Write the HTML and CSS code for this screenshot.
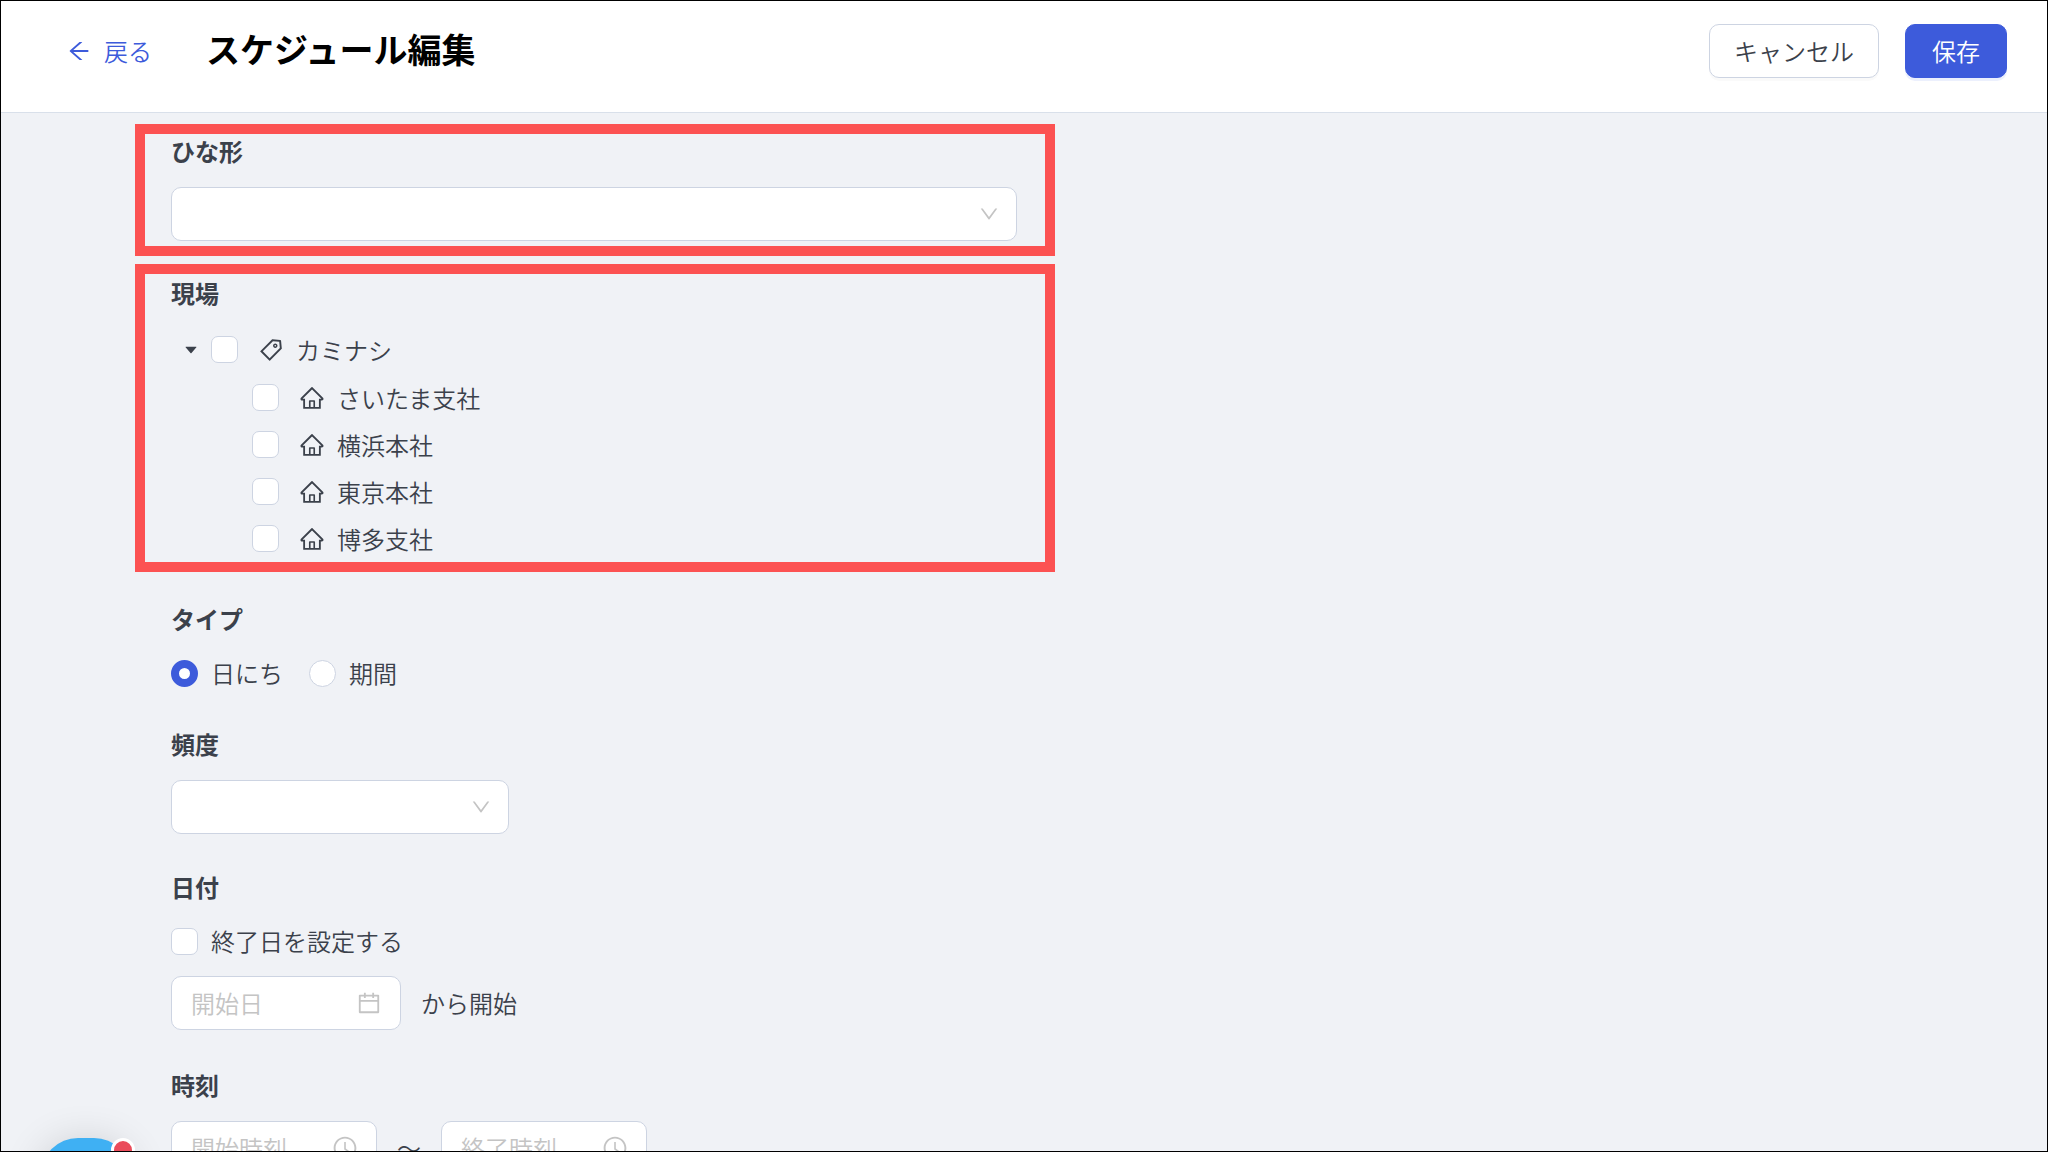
FILE: index.html
```html
<!DOCTYPE html>
<html lang="ja">
<head>
  <meta charset="UTF-8" />
  <meta name="viewport" content="width=device-width, initial-scale=1" />
  <title>スケジュール編集</title>
  <link rel="stylesheet" href="styles.css">
</head>
<body>
  <svg class="sprite" xmlns="http://www.w3.org/2000/svg">
    <symbol id="icon-left" viewBox="0 0 1024 1024">
      <path d="M872 474H286.900l350.200-304c5.600-4.900 2.200-14-5.200-14h-88.500c-3.900 0-7.600 1.400-10.500 3.900L155 487.800a31.960 31.960 0 0 0 0 48.300L535.100 866c1.500 1.300 3.300 2 5.200 2h91.500c7.400 0 10.800-9.200 5.200-14L286.900 550H872c4.400 0 8-3.600 8-8v-60c0-4.400-3.600-8-8-8z"/>
    </symbol>
    <symbol id="icon-down" viewBox="0 0 1024 1024">
      <path d="M884 256h-75c-5.100 0-9.900 2.500-12.900 6.600L512 654.200 227.900 262.600c-3-4.100-7.800-6.600-12.900-6.600h-75c-6.500 0-10.300 7.400-6.500 12.700l352.600 486.100c12.800 17.600 39 17.600 51.700 0l352.600-486.100c3.900-5.300.1-12.700-6.400-12.700z"/>
    </symbol>
    <symbol id="icon-caret" viewBox="0 0 1024 1024">
      <path d="M840.400 300H183.600c-19.700 0-30.700 20.800-18.500 35l328.400 380.800c9.400 10.900 27.500 10.900 37 0L858.900 335c12.200-14.200 1.200-35-18.500-35z"/>
    </symbol>
    <symbol id="icon-tag" viewBox="0 0 1024 1024">
      <path d="M938 458.800l-29.600-312.600c-1.500-16.200-14.400-29-30.600-30.600L565.200 86h-.4c-3.200 0-5.700 1-7.600 2.900L88.900 557.200a9.960 9.960 0 0 0 0 14.100l363.800 363.800c1.900 1.900 4.400 2.900 7.100 2.900s5.200-1 7.100-2.900l468.300-468.300c2-2.100 3-5 2.800-8zM459.700 834.700L189.300 564.300 589 164.600 836 188l23.400 247-399.700 399.700zM680 256c-48.500 0-88 39.500-88 88s39.500 88 88 88 88-39.500 88-88-39.500-88-88-88zm0 120c-17.700 0-32-14.300-32-32s14.300-32 32-32 32 14.300 32 32-14.300 32-32 32z"/>
    </symbol>
    <symbol id="icon-home" viewBox="0 0 1024 1024">
      <path d="M946.500 505L560.100 118.800l-25.900-25.900a31.500 31.500 0 0 0-44.400 0L77.500 505a63.900 63.900 0 0 0-18.800 46c.4 35.200 29.700 63.300 64.900 63.300h42.500V940h691.800V614.300h43.400c17.100 0 33.200-6.700 45.300-18.800a63.600 63.600 0 0 0 18.700-45.300c0-17-6.700-33.100-18.800-45.200zM568 868H456V664h112v204zm217.900-325.700V868H632V640c0-22.100-17.900-40-40-40H432c-22.100 0-40 17.900-40 40v228H238.100V542.300h-96l370-369.700 23.100 23.100L882 542.300h-96.100z"/>
    </symbol>
    <symbol id="icon-calendar" viewBox="0 0 1024 1024">
      <path d="M880 184H712v-64c0-4.400-3.600-8-8-8h-56c-4.400 0-8 3.600-8 8v64H384v-64c0-4.400-3.600-8-8-8h-56c-4.400 0-8 3.600-8 8v64H144c-17.700 0-32 14.300-32 32v664c0 17.700 14.300 32 32 32h736c17.700 0 32-14.300 32-32V216c0-17.700-14.300-32-32-32zm-40 656H184V460h656v380zM184 392V256h128v48c0 4.400 3.600 8 8 8h56c4.400 0 8-3.600 8-8v-48h256v48c0 4.400 3.600 8 8 8h56c4.400 0 8-3.600 8-8v-48h128v136H184z"/>
    </symbol>
    <symbol id="icon-clock" viewBox="0 0 1024 1024">
      <path d="M512 64C264.600 64 64 264.600 64 512s200.600 448 448 448 448-200.600 448-448S759.400 64 512 64zm0 820c-205.400 0-372-166.600-372-372s166.600-372 372-372 372 166.600 372 372-166.600 372-372 372z"/>
      <path d="M686.700 638.600L544.100 535.500V288c0-4.400-3.600-8-8-8H488c-4.400 0-8 3.600-8 8v275.400c0 2.600 1.200 5 3.300 6.500l165.400 120.600c3.600 2.600 8.600 1.800 11.200-1.700l28.600-39c2.600-3.700 1.800-8.700-1.800-11.200z"/>
    </symbol>
  </svg>

  <header>
    <a class="back" href="#"><svg class="icon"><use href="#icon-left"/></svg>戻る</a>
    <h1>スケジュール編集</h1>
    <div class="actions">
      <button type="button" class="btn">キャンセル</button>
      <button type="submit" form="schedule" class="btn primary">保存</button>
    </div>
  </header>

  <main>
    <form id="schedule">
      <div class="field highlight">
        <label class="title" for="template">ひな形</label>
        <div class="select">
          <select id="template"><option></option></select>
          <svg class="arrow"><use href="#icon-down"/></svg>
        </div>
      </div>

      <fieldset class="field highlight site">
        <div class="title" id="site-title">現場</div>
        <ul class="tree" aria-labelledby="site-title">
          <li>
            <div class="node">
              <button type="button" class="toggle" aria-label="折りたたむ"><svg><use href="#icon-caret"/></svg></button>
              <label><input type="checkbox"><svg class="icon"><use href="#icon-tag"/></svg>カミナシ</label>
            </div>
            <ul>
              <li class="node"><label><input type="checkbox"><svg class="icon"><use href="#icon-home"/></svg>さいたま支社</label></li>
              <li class="node"><label><input type="checkbox"><svg class="icon"><use href="#icon-home"/></svg>横浜本社</label></li>
              <li class="node"><label><input type="checkbox"><svg class="icon"><use href="#icon-home"/></svg>東京本社</label></li>
              <li class="node"><label><input type="checkbox"><svg class="icon"><use href="#icon-home"/></svg>博多支社</label></li>
            </ul>
          </li>
        </ul>
      </fieldset>

      <fieldset class="field">
        <div class="title">タイプ</div>
        <div class="options">
          <label><input type="radio" name="type" checked>日にち</label>
          <label><input type="radio" name="type">期間</label>
        </div>
      </fieldset>

      <div class="field">
        <label class="title" for="frequency">頻度</label>
        <div class="select short">
          <select id="frequency"><option></option></select>
          <svg class="arrow"><use href="#icon-down"/></svg>
        </div>
      </div>

      <fieldset class="field">
        <div class="title">日付</div>
        <div class="options">
          <label><input type="checkbox">終了日を設定する</label>
        </div>
        <div class="row date-row">
          <label class="picker date">
            <input type="text" placeholder="開始日" aria-label="開始日">
            <svg class="icon"><use href="#icon-calendar"/></svg>
          </label>
          <span>から開始</span>
        </div>
      </fieldset>

      <fieldset class="field">
        <div class="title">時刻</div>
        <div class="row">
          <label class="picker">
            <input type="text" placeholder="開始時刻" aria-label="開始時刻">
            <svg class="icon"><use href="#icon-clock"/></svg>
          </label>
          <span>〜</span>
          <label class="picker">
            <input type="text" placeholder="終了時刻" aria-label="終了時刻">
            <svg class="icon"><use href="#icon-clock"/></svg>
          </label>
        </div>
      </fieldset>
    </form>
  </main>

  <button type="button" class="chat" aria-label="チャット"><span class="badge"></span></button>
</body>
</html>
```

FILE: styles.css
```css
* {
  box-sizing: border-box;
}
body {
  position: relative;
  display: flex;
  flex-direction: column;
  height: 100vh;
  margin: 0;
  border: 1px solid #000;
  background: #f0f2f6;
  color: #3b414b;
  font-family: "Noto Sans CJK JP", sans-serif;
  font-size: 24px;
  font-weight: 350;
  line-height: 34px;
  overflow: hidden;
}
button, input, select {
  font: inherit;
  color: inherit;
}
.sprite {
  position: absolute;
  width: 0;
  height: 0;
}
.icon {
  flex: none;
  width: 26px;
  height: 26px;
  fill: currentColor;
}

/* header */
header {
  flex: none;
  display: flex;
  align-items: center;
  height: 112px;
  padding: 0 40px 12px 65px;
  background: #fff;
  border-bottom: 1px solid #d9e0ea;
}
.back {
  display: flex;
  align-items: center;
  gap: 12px;
  color: #3d5bdb;
  text-decoration: none;
}
h1 {
  margin: 0 0 4px 54px;
  color: #000;
  font-size: 34px;
  font-weight: 700;
  line-height: 48px;
}
.actions {
  display: flex;
  gap: 26px;
  margin-left: auto;
}
.btn {
  height: 54px;
  min-width: 102px;
  padding: 0 24px;
  background: #fff;
  border: 1px solid #cdd4e2;
  border-radius: 10px;
  box-shadow: 0 3px 0 rgba(0, 0, 0, 0.02);
  cursor: pointer;
}
.btn.primary {
  background: #3d5bdb;
  border-color: #3d5bdb;
  box-shadow: 0 3px 0 #ecf0fd;
  color: #fff;
}

/* form */
main {
  flex: 1;
  min-height: 0;
  padding: 11px 134px 0;
  overflow: hidden;
}
form {
  max-width: 920px;
}
.field {
  min-width: 0;
  margin: 0 0 36px;
  padding: 0 36px;
  border: 0;
}
.highlight {
  margin-bottom: 8px;
  padding: 0 28px 5px 26px;
  border: 10px solid #fc5252;
}
.title {
  display: block;
  margin-bottom: 19px;
  font-weight: 700;
}
.select {
  position: relative;
}
.select.short {
  width: 338px;
}
.select select {
  display: block;
  width: 100%;
  height: 54px;
  padding: 0 50px 0 20px;
  appearance: none;
  background: #fff;
  border: 1px solid #cdd4e2;
  border-radius: 10px;
}
.arrow {
  position: absolute;
  top: 16px;
  right: 17px;
  width: 22px;
  height: 22px;
  fill: #c4c4c4;
  pointer-events: none;
}

/* site tree */
.site {
  margin-bottom: 30px;
  padding-top: 2px;
  padding-bottom: 0;
}
.site .title {
  margin-bottom: 16px;
}
.tree, .tree ul {
  margin: 0;
  padding: 0;
  list-style: none;
}
.tree {
  padding-left: 12px;
}
.tree ul {
  padding: 1px 0 0 69px;
}
.node {
  display: flex;
  align-items: center;
  gap: 12px;
  height: 47px;
}
.node label {
  display: flex;
  align-items: center;
  gap: 12px;
}
.node .icon {
  margin-left: 8px;
}
.toggle {
  display: flex;
  padding: 0;
  background: none;
  border: 0;
  cursor: pointer;
}
.toggle svg {
  width: 16px;
  height: 16px;
  fill: currentColor;
}
input[type="checkbox"], input[type="radio"] {
  flex: none;
  width: 27px;
  height: 27px;
  margin: 0;
  appearance: none;
  background: #fff;
  border: 1px solid #cdd4e2;
  border-radius: 7px;
}
input[type="radio"] {
  border-radius: 50%;
}
input[type="radio"]:checked {
  border: 8px solid #3d5bdb;
}
input[type="checkbox"]:checked {
  background: #3d5bdb;
}
.options {
  display: flex;
  gap: 26px;
  height: 36px;
}
.options label {
  display: flex;
  align-items: center;
  gap: 13px;
}

/* date and time */
.row {
  display: flex;
  align-items: center;
  gap: 20px;
}
.date-row {
  margin: 17px 0 38px;
}
.picker {
  display: flex;
  align-items: center;
  width: 206px;
  height: 54px;
  padding: 0 18px 0 19px;
  background: #fff;
  border: 1px solid #cdd4e2;
  border-radius: 10px;
}
.picker.date {
  width: 230px;
}
.picker input {
  flex: 1;
  min-width: 0;
  height: 34px;
  padding: 0;
  background: none;
  border: 0;
}
.picker input::placeholder {
  color: #c4c4c4;
}
.picker .icon {
  fill: #c4c4c4;
}
.field:has(.date-row) {
  margin-bottom: 0;
}

/* chat launcher, hangs off the bottom edge */
.chat {
  position: absolute;
  left: 40px;
  bottom: -77px;
  width: 90px;
  height: 90px;
  background: #3fb0f3;
  border: 0;
  border-radius: 37px;
  box-shadow: 0 4px 40px rgba(0, 0, 0, 0.16);
}
.badge {
  position: absolute;
  top: 0;
  right: -4px;
  width: 24px;
  height: 24px;
  background: #ea4c5b;
  border: 3px solid #fff;
  border-radius: 50%;
}
```
